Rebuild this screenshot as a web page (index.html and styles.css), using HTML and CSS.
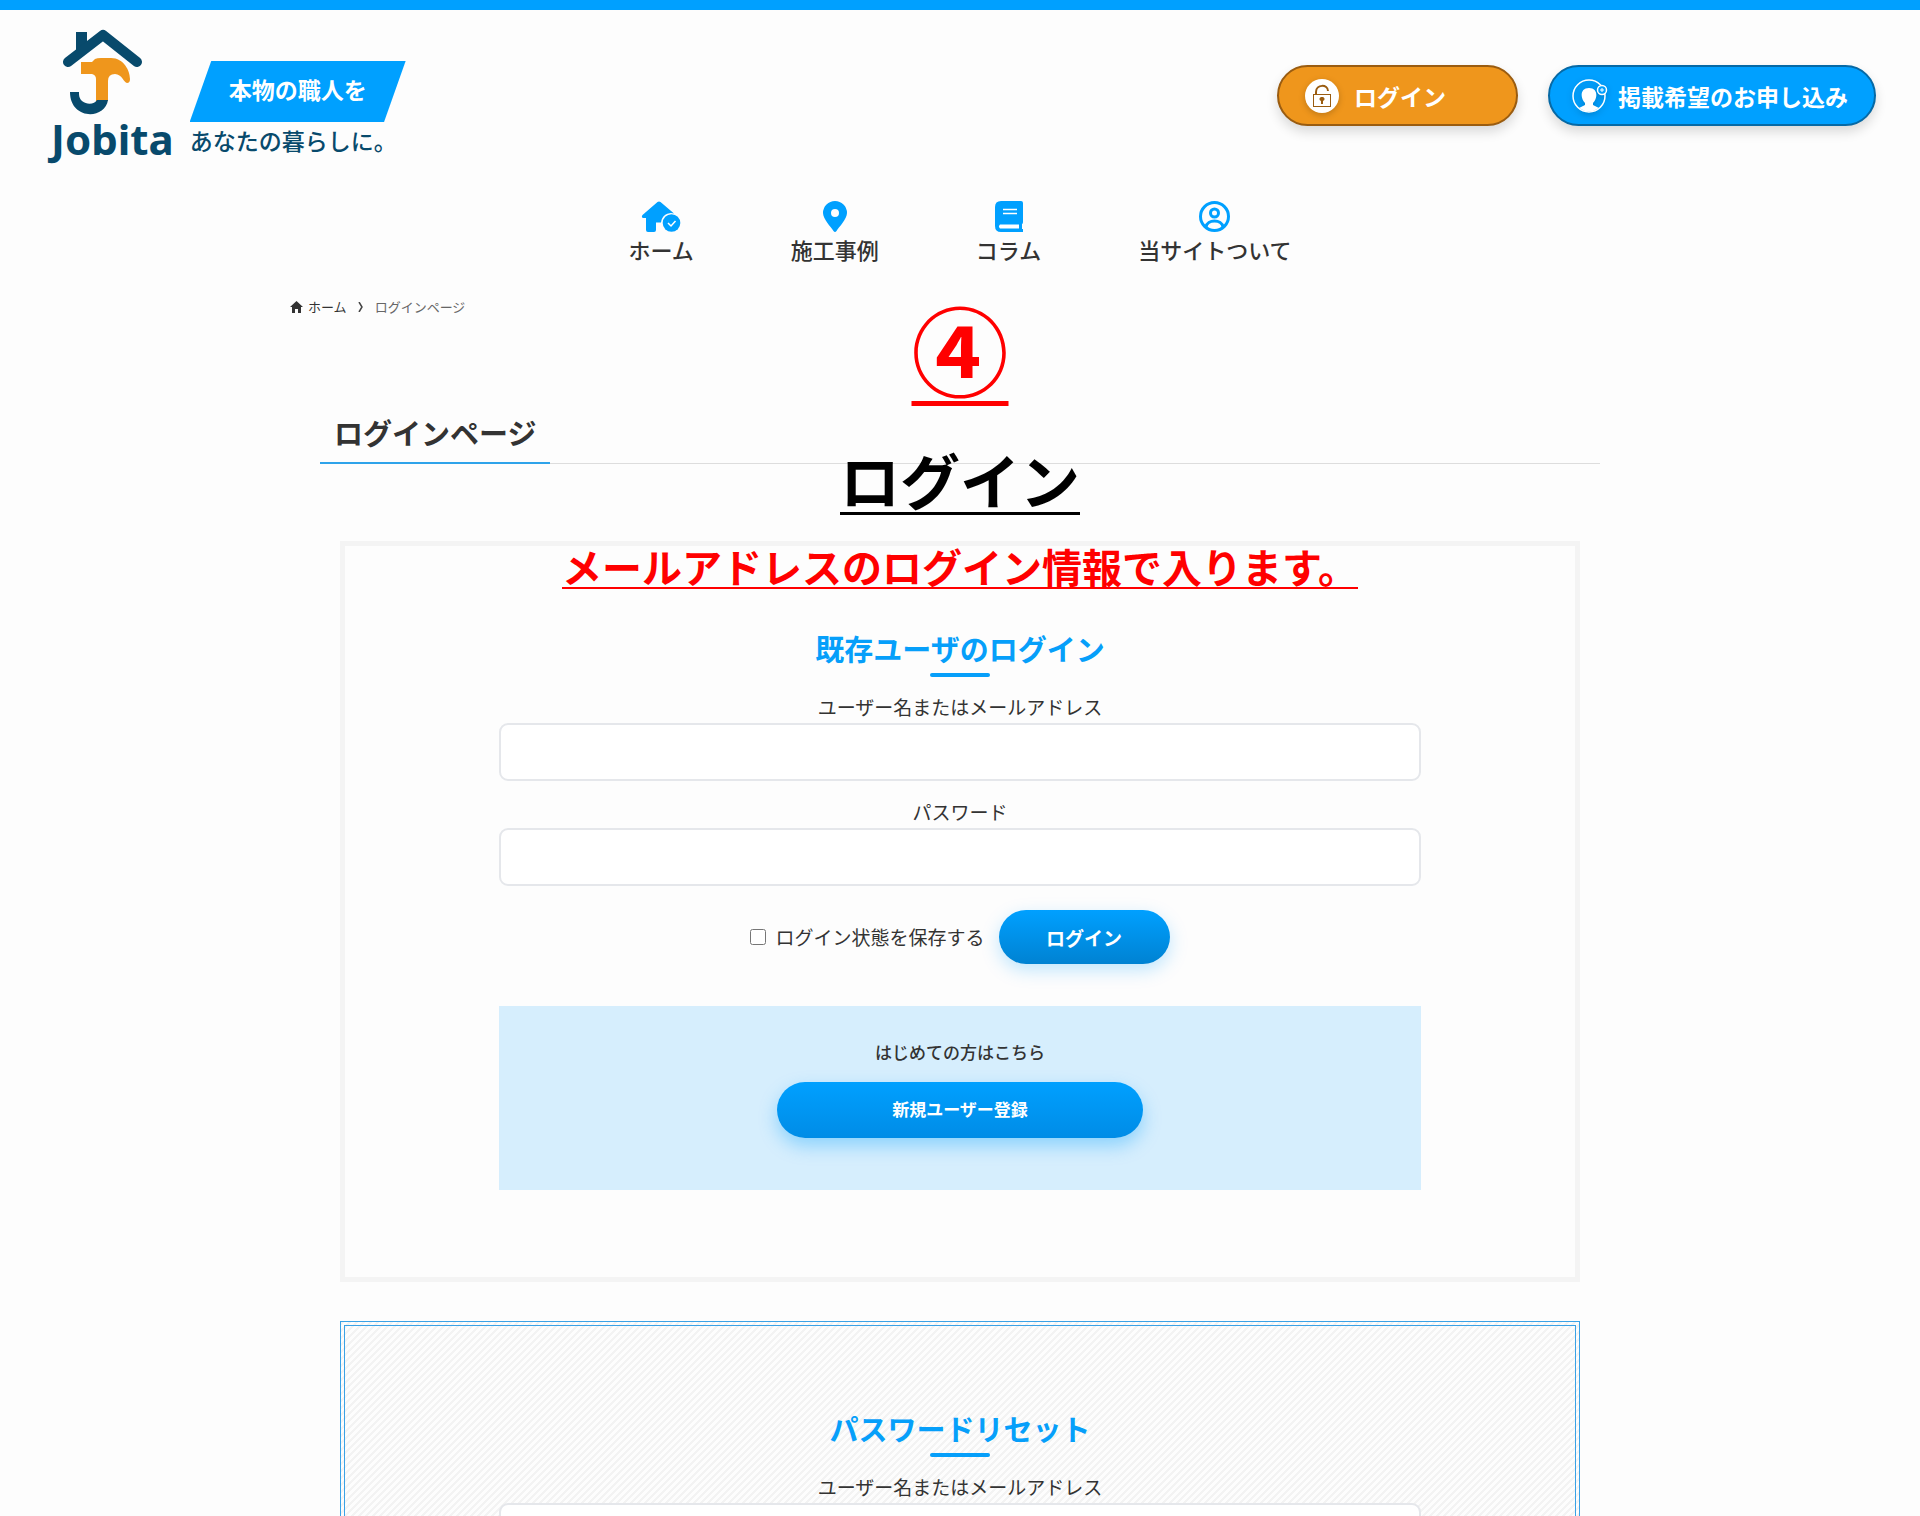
FILE: index.html
```
<!DOCTYPE html>
<html lang="ja">
<head>
    <meta charset="UTF-8">
    <meta name="viewport" content="width=device-width, initial-scale=1.0">
    <title>ログインページ | Jobita</title>
    <link rel="stylesheet" href="styles.css">
</head>
<body>
<header class="header">
    <div class="header-top">
        <a class="logo" href="#">
            <svg class="logo-mark" viewBox="0 0 80 86" width="80" height="86">
                <path d="M13 3h11v18l-11 9z" fill="#084a6c"/>
                <path d="M5 33L40 6l34 27" fill="none" stroke="#084a6c" stroke-width="10" stroke-linecap="round" stroke-linejoin="round"/>
                <path d="M18 33h11l3-3q2-1 6-1h10c13 0 19 13 19 21q0 4-3 4c-3 0-5-9-12-9q-7 0-7 7v20H33V50q0-4-4-5H18z" fill="#ef961c"/>
                <path d="M7 63h9v2c0 11 15 12 18 6h11c-3 20-38 20-38-8z" fill="#084a6c"/>
            </svg>
            <span class="logo-name">Jobita</span>
        </a>
        <div class="tagline">
            <div class="tagline-top">本物の職人を</div>
            <div class="tagline-bottom">あなたの暮らしに。</div>
        </div>
        <div class="header-actions">
            <a class="pill pill-login" href="#">
                <svg viewBox="0 0 34 34" width="34" height="34">
                    <circle cx="17" cy="17" r="17" fill="#fff"/>
                    <path d="M11 15v-2c0-8 12-8 12-1" fill="none" stroke="#9a5c10" stroke-width="2"/>
                    <rect x="8.500" y="15.500" width="17" height="12" fill="none" stroke="#9a5c10"/>
                    <path d="M17 18a2 2 0 0 1 1 4v3h-2v-3a2 2 0 0 1 1-4z" fill="#9a5c10"/>
                </svg>
                ログイン
            </a>
            <a class="pill pill-apply" href="#">
                <svg viewBox="0 0 36 34" width="36" height="34">
                    <circle cx="17" cy="17" r="16" fill="none" stroke="#fff" stroke-width="1.500"/>
                    <path d="M17 9c9 0 9 10 4 15v2l6 3q-10 7-20 0l6-3v-2C8 19 8 9 17 9z" fill="#fff"/>
                    <circle cx="30" cy="11" r="4.500" fill="#00a0ff" stroke="#fff" stroke-width="1.500"/>
                    <path d="M30 9v4M28 11h4" stroke="#fff"/>
                </svg>
                掲載希望のお申し込み
            </a>
        </div>
    </div>
    <nav class="nav">
        <a href="#">
            <svg viewBox="0 0 40 31" width="40" height="31" fill="currentColor">
                <path d="M16.500 1q1.500-1 3 0L33 12.500a10 10 0 0 0-13 9h-5V29q0 2-2 2H7q-2 0-2-2V17H2q-2-1-.500-3z"/>
                <circle cx="30.500" cy="22" r="8.800"/>
                <path d="M27 22l3 3 4.500-5" fill="none" stroke="#fff" stroke-width="1.500"/>
            </svg>
            ホーム
        </a>
        <a href="#">
            <svg viewBox="0 0 24 31" width="24" height="31" fill="currentColor">
                <path fill-rule="evenodd" d="M12 0a12 12 0 0 1 12 12c0 6-8 14-10.500 18q-1.500 2-3 0C8 26 0 18 0 12A12 12 0 0 1 12 0zM12 8a4 4 0 1 0 0 8 4 4 0 0 0 0-8z"/>
            </svg>
            施工事例
        </a>
        <a href="#">
            <svg viewBox="0 0 28 31" width="28" height="31" fill="currentColor">
                <path d="M6 0h20q2 0 2 2v19q0 2-1 2v5h1v3H6q-6 0-6-6V6q0-6 6-6z"/>
                <path d="M8 8.500h14M8 12.500h14" stroke="#fff" stroke-width="1.500"/>
                <path d="M5 23.500h19v4H5q-2-2 0-4z" fill="#fff"/>
            </svg>
            コラム
        </a>
        <a href="#">
            <svg viewBox="0 0 31 31" width="31" height="31" fill="none" stroke="currentColor" stroke-width="3">
                <circle cx="15.500" cy="15.500" r="14"/>
                <circle cx="15.500" cy="12" r="4"/>
                <path d="M7 26c1-8 16-8 17 0"/>
            </svg>
            当サイトついて
        </a>
    </nav>
</header>

<main class="main">
    <div class="breadcrumb">
        <a href="#">
            <svg viewBox="0 0 13 12" width="13" height="12"><path d="M6.500 0L13 6h-2v6H8V8H5v4H2V6H0z" fill="#333"/></svg>
            ホーム
        </a>
        <svg viewBox="0 0 6 10" width="6" height="10"><path d="M1 0l3 5-3 5" fill="none" stroke="#444" stroke-width="1.500"/></svg>
        <span>ログインページ</span>
    </div>

    <div class="content">
        <h1 class="page-title"><span>ログインページ</span></h1>

        <section class="box">
            <form class="form">
                <h2 class="form-title">既存ユーザのログイン</h2>
                <label for="login-user">ユーザー名またはメールアドレス</label>
                <input class="text-box" type="text" id="login-user">
                <label for="login-password">パスワード</label>
                <input class="text-box" type="password" id="login-password">
                <div class="form-row">
                    <input type="checkbox" id="remember">
                    <label for="remember">ログイン状態を保存する</label>
                    <button class="btn btn-login" type="submit">ログイン</button>
                </div>
                <div class="signup">
                    <p>はじめての方はこちら</p>
                    <button class="btn btn-signup" type="button">新規ユーザー登録</button>
                </div>
            </form>
        </section>

        <section class="box box-reset">
            <form class="form">
                <h2 class="form-title">パスワードリセット</h2>
                <label for="reset-user">ユーザー名またはメールアドレス</label>
                <input class="text-box" type="text" id="reset-user">
            </form>
        </section>
    </div>

    <!-- step note over the page -->
    <div class="note">
        <p class="note-number">④</p>
        <p class="note-title">ログイン</p>
        <p class="note-text">メールアドレスのログイン情報で入ります。</p>
    </div>
</main>
</body>
</html>
```

FILE: styles.css
```
* {
    box-sizing: border-box;
}

body {
    margin: 0;
    height: 100vh;
    overflow: hidden;
    border-top: 10px solid #00a0ff;
    background-color: #fdfdfd;
    color: #333;
    font-family: "Noto Sans CJK JP", sans-serif;
    font-size: 19px;
}

a {
    color: inherit;
    text-decoration: none;
}

svg {
    display: block;
    flex-shrink: 0;
}

h1, h2, p {
    margin: 0;
}

/* header */
.header {
    padding-top: 19px;
}

.header-top {
    display: flex;
    align-items: flex-start;
    padding: 0 44px 0 51px;
}

.logo {
    display: flex;
    flex-direction: column;
    color: #084a6c;
}

.logo-mark {
    margin-left: 12px;
}

.logo-name {
    font-family: "Noto Sans", sans-serif;
    font-size: 42px;
    font-weight: bold;
    line-height: 48px;
}

.tagline {
    margin: 32px 0 0 16px;
    font-size: 23px;
    color: #084a6c;
}

.tagline-top {
    width: 216px;
    padding-bottom: 4px;
    line-height: 57px;
    text-align: center;
    font-weight: bold;
    color: white;
    background-color: #00a0ff;
    clip-path: polygon(10% 0, 100% 0, 90% 100%, 0 100%);
}

.tagline-bottom {
    line-height: 36px;
    font-weight: 500;
}

.header-actions {
    display: flex;
    align-items: flex-end;
    gap: 30px;
    margin: 36px 0 0 auto;
}

.pill {
    display: flex;
    align-items: center;
    height: 61px;
    border: 2px solid;
    border-radius: 31px;
    font-size: 23px;
    font-weight: bold;
    color: white;
    box-shadow: 0 6px 12px rgba(0, 0, 0, 0.14);
}

.pill svg {
    filter: drop-shadow(0 2px 3px rgba(0, 0, 0, 0.2));
}

.pill-login {
    width: 241px;
    gap: 15px;
    padding-left: 26px;
    background-color: #ef961c;
    border-color: #9a5c10;
}

.pill-apply {
    gap: 10px;
    padding: 0 26px 0 22px;
    background-color: #00a0ff;
    border-color: #0669a5;
}

.nav {
    display: flex;
    justify-content: center;
    gap: 97px;
    margin-top: 38px;
}

.nav a {
    display: flex;
    flex-direction: column;
    align-items: center;
    gap: 2px;
    font-size: 22px;
    font-weight: 500;
    line-height: 30px;
}

.nav svg {
    color: #00a0ff;
}

/* page */
.main {
    position: relative;
    padding-top: 33px;
}

.breadcrumb {
    display: flex;
    align-items: center;
    gap: 11px;
    max-width: 1340px;
    margin: 0 auto;
    font-size: 13px;
    line-height: 20px;
}

.breadcrumb a {
    display: flex;
    align-items: center;
    gap: 5px;
}

.breadcrumb span {
    color: #666;
}

.content {
    max-width: 1280px;
    margin: 93px auto 0;
}

.page-title {
    display: flex;
    border-bottom: 1px solid #ddd;
    font-size: 29px;
    line-height: 44px;
    font-weight: bold;
}

.page-title span {
    margin-bottom: -1px;
    padding: 0 14px 8px;
    border-bottom: 2px solid #2ea3ea;
}

.box {
    margin: 77px 20px 0;
    padding: 80px 0 87px;
    border: 5px solid #f4f4f4;
}

.box-reset {
    margin-top: 39px;
    padding: 84px 4px 87px;
    border: 1px solid #3ba2e6;
    outline: 1px solid #3ba2e6;
    outline-offset: -5px;
    background-image: linear-gradient(-45deg, transparent 25%, #f3f3f3 25%, #f3f3f3 50%, transparent 50%, transparent 75%, #f3f3f3 75%);
    background-size: 7px 7px;
}

.form {
    width: 75%;
    margin: 0 auto;
    text-align: center;
}

.form-title {
    margin-bottom: 14px;
    font-size: 29px;
    line-height: 45px;
    color: #069ffa;
}

.form-title::after {
    content: "";
    display: block;
    width: 60px;
    height: 4px;
    margin: 2px auto 0;
    border-radius: 2px;
    background-color: #069ffa;
}

.form label {
    display: block;
    line-height: 32px;
}

.text-box {
    display: block;
    width: 100%;
    height: 58px;
    margin-bottom: 15px;
    padding: 0 16px;
    border: 2px solid #e5e7eb;
    border-radius: 9px;
    background-color: white;
    font: inherit;
}

.form-row {
    display: flex;
    justify-content: center;
    align-items: center;
    margin-top: 24px;
}

.form-row input {
    width: 16px;
    height: 16px;
    margin: 0 9px 0 0;
}

.btn {
    border: none;
    border-radius: 28px;
    font-family: inherit;
    font-weight: bold;
    color: white;
    cursor: pointer;
}

.btn-login {
    width: 171px;
    height: 54px;
    margin-left: 14px;
    font-size: 19px;
    background: linear-gradient(#00a0ff, #0082d2);
    box-shadow: 0 6px 18px rgba(0, 160, 255, 0.25);
}

.signup {
    margin-top: 42px;
    padding: 32px 0 52px;
    background-color: #d6eefd;
    font-size: 17px;
    font-weight: 500;
    line-height: 28px;
}

.btn-signup {
    display: block;
    width: 366px;
    height: 56px;
    margin: 16px auto 0;
    padding-bottom: 4px;
    font-size: 17px;
    background: linear-gradient(#00a0ff, #008ce6);
    box-shadow: 0 8px 18px rgba(0, 160, 255, 0.35);
}

/* note */
.note {
    position: absolute;
    top: 33px;
    left: 0;
    width: 100%;
    text-align: center;
    font-weight: bold;
    text-decoration-skip-ink: none;
    pointer-events: none;
}

.note p {
    text-decoration-line: underline;
}

.note-number {
    font-size: 97px;
    line-height: 100px;
    color: #f00;
    text-decoration-thickness: 5px;
    text-underline-offset: 12px;
}

.note-title {
    margin-top: 42px;
    font-size: 60px;
    line-height: 80px;
    color: black;
    text-decoration-thickness: 3px;
    text-underline-offset: 7px;
}

.note-text {
    margin-top: 17px;
    font-size: 40px;
    line-height: 60px;
    color: #f00;
    text-decoration-thickness: 2px;
    text-underline-offset: 4px;
}
```
